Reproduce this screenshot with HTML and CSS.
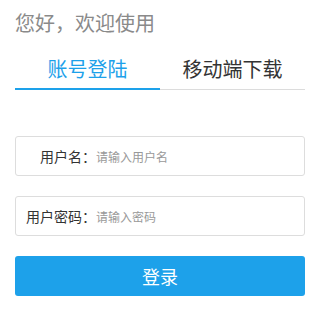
FILE: index.html
```html
<!DOCTYPE html>
<html lang="zh-CN">
<head>
<meta charset="utf-8">
<title>登录</title>
<link rel="stylesheet" href="styles.css">
</head>
<body>
<div class="page">
  <div class="greeting">您好，欢迎使用</div>
  <div class="tabs">
    <div class="tab active">账号登陆</div>
    <div class="tab">移动端下载</div>
  </div>
  <form class="form">
    <label class="field">
      <span class="label">用户名：</span>
      <input class="input" type="text" placeholder="请输入用户名">
    </label>
    <label class="field">
      <span class="label">用户密码：</span>
      <input class="input" type="password" placeholder="请输入密码">
    </label>
    <button class="submit" type="button">登录</button>
  </form>
</div>
</body>
</html>
```

FILE: styles.css
```css
html, body {
  margin: 0;
  padding: 0;
  background: #fff;
}
body {
  font-family: "Microsoft YaHei", "Noto Sans CJK SC", "Noto Sans", sans-serif;
  color: #333;
}
.page {
  width: 290px;
  padding: 10px 15px 0;
}
.greeting {
  font-size: 20px;
  line-height: 26px;
  color: #8a8a8a;
}
.tabs {
  display: flex;
  margin-top: 19px;
  border-bottom: 1px solid #dcdcdc;
}
.tab {
  flex: 1;
  text-align: center;
  font-size: 20px;
  line-height: 28px;
  padding-bottom: 5px;
  border-bottom: 2px solid transparent;
  margin-bottom: -1px;
  color: #333;
}
.tab.active {
  color: #1da1ea;
  border-bottom-color: #1da1ea;
}
.form {
  display: flex;
  flex-direction: column;
  gap: 20px;
  margin: 46px 0 0;
}
.field {
  display: flex;
  align-items: center;
  height: 40px;
  box-sizing: border-box;
  border: 1px solid #dddddd;
  border-radius: 3px;
  padding-left: 10px;
}
.label {
  width: 70px;
  text-align: right;
  font-size: 14px;
  color: #333;
  flex: none;
}
.input {
  flex: 1;
  min-width: 0;
  border: none;
  outline: none;
  padding: 0;
  font-family: inherit;
  font-size: 12px;
  color: #333;
  background: transparent;
}
.input::placeholder {
  color: #999;
}
.submit {
  height: 40px;
  border: none;
  border-radius: 3px;
  background: #1da1ea;
  color: #fff;
  font-family: inherit;
  font-size: 18px;
  padding: 0;
}
```
